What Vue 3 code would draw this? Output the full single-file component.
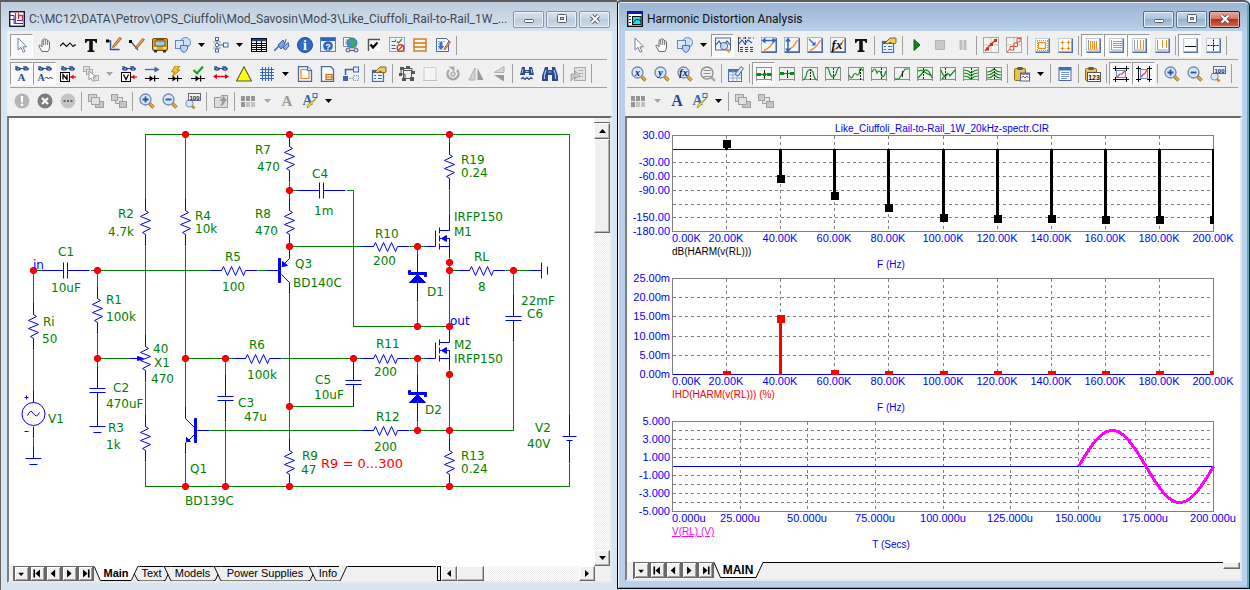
<script setup>
const navy = '#2b4a8b'
const lens = (inner) =>
  `<path d="M10.5 10.5L14.5 14.5" stroke="#a86f1c" stroke-width="3.4"/><path d="M10.5 10.3L14.3 14.1" stroke="#f0b63c" stroke-width="1.6"/><circle cx="6.5" cy="6.5" r="5.500" fill="#d6e8fb" stroke="#6f88b0" stroke-width="1.3"/>${inner}`
const glasses = `<g fill="${navy}"><ellipse cx="4" cy="2.8" rx="2.9" ry="1.9"/><ellipse cx="12" cy="2.8" rx="2.9" ry="1.9"/><path d="M6 2h4v1H6zM1 .2h3v1H1zM9 .2h4v1H9z"/></g><path d="M3 3h2M11 3h2" stroke="#9db6e0"/>`
const diode = `<path d="M1 12.5h14" stroke="#000"/><path d="M5.5 9.5v6l4-3zM10 9.5h1.2v6H10z" fill="#000"/>`
const panel = (inner) =>
  `<rect x="1.5" y="1.5" width="13" height="13" fill="#fff" stroke="#c3cbd8"/><path d="M1.5 15.5h14v-14" stroke="#54719f" stroke-width="1.6" fill="none"/>${inner}`
const wave = (inner) =>
  `<path d="M.5 1v14M15.500 1v14" stroke="#8c8c8c" fill="none"/><path d="M0 1.500h16M0 13.500h16" stroke="#8c8c8c" fill="none"/><g fill="none" stroke="#0b8a17" stroke-width="1.2">${inner}</g>`
const curve = (inner) =>
  `<rect x=".5" y=".5" width="14" height="14" fill="#f4f8fd" stroke="#a3b4cc"/><path d="M.5 15.3h15.1V1" stroke="#4d6792" fill="none" stroke-width="1.4"/><path d="M3 13.5C7 12 11 8 13.5 3" stroke="#ef8a22" stroke-width="1.4" fill="none"/>${inner}`
const ball = (t) => lens(`<text x="6.500" y="9.500" text-anchor="middle" font-family="Liberation Serif" font-size="10" font-style="italic" font-weight="bold" fill="#0b1735">${t}</text>`)
const pencil = `<path d="M15.500 1.500L9 9.500L6.500 10.500L7.500 8L13.500 .5Z" fill="#e6a865" stroke="#8a4b1c" stroke-width=".8"/>`
const serif = (t, c, s = 15, x = 8, y = 13) =>
  `<text x="${x}" y="${y}" text-anchor="middle" font-family="Liberation Serif" font-size="${s}" font-weight="bold" fill="${c}">${t}</text>`
const clip = `<rect x=".5" y="2.500" width="11" height="12" rx="1" fill="#edc04a" stroke="#8c6a1b"/><path d="M3.500 1h5v3h-5z" fill="#5a5a5a"/>`
const bigT = `<path d="M2 2h12v4h-1.200q-.4-2.300-3-2.300v9q0 .9 1.700.9V15h-7v-1.400q1.700 0 1.700-.9v-9q-2.600 0-3 2.300H2z" fill="#111"/>`

const icons = {
  cursor: `<path d="M4 1V13L7 10.4L9.2 15.2L11 14.4L8.9 9.8H12.5Z" fill="#fff" stroke="#6b7fa3"/>`,
  hand: `<path d="M5 14.5L2 9.5Q1.4 7.8 3.2 8.2L5 10V3.5Q5.8 2.2 6.6 3.5V2.3Q7.6 1 8.6 2.3V3Q9.6 1.9 10.5 3.2V4.4Q11.6 3.3 12.5 4.8V10Q12.4 13 11 14.5Z" fill="#f8f8f8" stroke="#6a6a6a"/><path d="M6.7 3.5V8M8.7 3V8M10.6 4.4V8" stroke="#6a6a6a" stroke-width=".9"/>`,
  zigzag: `<path d="M0 9L3 6L6.500 9.500L10 6L13 9.500L14.500 8H16" fill="none" stroke="#000" stroke-width="1.1"/>`,
  text: bigT,
  wire: `<path d="M1 4h3.5v8.5h9" fill="none" stroke="${navy}" stroke-width="1.4"/><rect y="2.5" width="3" height="3" fill="#000"/>${pencil}`,
  diag: `<path d="M1.5 4L9 13" fill="none" stroke="#555" stroke-width="1.2"/><rect y="3" width="3" height="3" fill="#000"/><g transform="translate(0 1)">${pencil}</g>`,
  bus: `<rect x=".5" y="1.5" width="15" height="12" rx="1.5" fill="#e8a80c" stroke="#6e4a08"/><rect x="3" y="4" width="10" height="5" fill="#9ecbe8" stroke="#444" stroke-width=".8"/><path d="M2 11h3M11 11h3" stroke="#fff" stroke-width="1.5"/><path d="M2 13h3v2.5H2zM11 13h3v2.5h-3z" fill="#333"/><path d="M4 2.5h8" stroke="#555"/>`,
  shapes: `<circle cx="10.5" cy="5.5" r="5" fill="#cfe0f6" stroke="#5f86bd"/><rect x=".5" y="3.5" width="8" height="8" fill="#dce9f9" stroke="#5f86bd"/><path d="M5.5 8.5h7v3.5q-1.5 3-3.5 3.5q-2.5-.6-3.5-3.5z" fill="#bcd3f2" stroke="#4672b4"/>`,
  flow: `<g fill="#fff" stroke="#44658f"><rect x="2.5" y=".5" width="3" height="3"/><circle cx="4" cy="8" r="1.8"/><rect x="2.5" y="12" width="3" height="3"/><rect x="10.5" y="6" width="4.5" height="4"/><path d="M4 3.5v2.7M4 10v2M6 8h4.5" fill="none"/></g><path d="M.5 5h2M.5 11h2M6 5h2M6 11h2" stroke="#6f8fb5"/>`,
  table: `<rect x=".5" y="1.5" width="15" height="13" fill="#fff" stroke="#000"/><path d="M1 3h14" stroke="#24418c" stroke-width="2.5"/><path d="M1 6.5h14M1 8.500h14M1 10.500h14M1 12.5h14M5.5 4v11M10.5 4v11" stroke="#000"/>`,
  plug: `<path d="M0 14L6 8" stroke="#4a6fb3" stroke-width="1.6"/><path d="M4 8L9 3L11 7L7 12Z" fill="#7fa3dc" stroke="#385b9f"/><path d="M9 11L14 5.5L15 9L11.5 13Z" fill="#97b6e6" stroke="#385b9f"/><path d="M12 2L11 6" stroke="#385b9f"/>`,
  info: `<circle cx="8" cy="8" r="7.5" fill="#2e6bc9" stroke="#1d4a99"/><text x="8" y="13" text-anchor="middle" font-family="Liberation Serif" font-weight="bold" font-size="14" fill="#fff">i</text>`,
  helpwin: `<rect x=".5" y=".5" width="15" height="14" fill="#e9f1fc" stroke="#5b7fb8"/><path d="M1 2.5h14" stroke="#2f62b5" stroke-width="3"/><circle cx="8" cy="9" r="4.8" fill="#2964c4"/><text x="8" y="12.5" text-anchor="middle" font-family="Liberation Sans" font-weight="bold" font-size="9" fill="#fff">?</text>`,
  net: `<path d="M.5 .5h7v9h-7z" fill="#fff" stroke="#8b8b8b"/><path d="M2 3h3M2 5h3M2 7h3" stroke="#8aa2c4"/><circle cx="9" cy="6" r="5" fill="#3c8fd4" stroke="#2b5f98" stroke-width=".8"/><path d="M6 3q3-2 4 1l3 1q-1 4-4 5l-1-3z" fill="#3fae45"/><path d="M5 13.5h8" stroke="#667" stroke-width="1.2"/><circle cx="5" cy="13" r="2" fill="#dde" stroke="#556"/><circle cx="13" cy="13" r="2" fill="#dde" stroke="#556"/>`,
  check: `<rect x="2" y="2" width="12" height="12" fill="#fff"/><path d="M2.5 14V2.5H14" stroke="#555" stroke-width="1.5" fill="none"/><path d="M4.5 7.5L7 10.5L11.5 5.5" fill="none" stroke="#000" stroke-width="2.2"/>`,
  props: `<rect x=".5" y=".5" width="15" height="14" fill="#eef4fb" stroke="#8ea6c8"/><path d="M2.5 4.5h4v-2M2.5 8.5h4M2.5 11.5h4" stroke="#3f5f94" fill="none"/><path d="M8 4.5l1.5 1.5l3.5-4" stroke="#2f9c38" stroke-width="1.4" fill="none"/><circle cx="11.5" cy="11" r="3.3" fill="#fff" stroke="#e0301e" stroke-width="1.4"/><path d="M9.5 13l4-4" stroke="#e0301e" stroke-width="1.3"/>`,
  ortho: `<rect x="2" y="2" width="12" height="12" fill="#fff8ec" stroke="#c97a1b" stroke-width="1.4"/><path d="M2 6h12M2 10h12" stroke="#c97a1b" stroke-width="1.4"/>`,
  edit: `<path d="M1.5 1.5h10l2 2v11h-12z" fill="#fff" stroke="#4b6897"/><path d="M3 4.5h8M3 7h3M3 12h6" stroke="#7d8fae" stroke-dasharray="1.5 1.2"/><path d="M4.500 5v4H2.500L6 13l3.500-4H7.500V5z" fill="#3b73d1"/><path d="M15.5 5L11 11.5L9.5 13L10 10.5L14 4Z" fill="#e9b27a" stroke="#8a3d1c" stroke-width=".8"/>`,
  glassA: glasses + serif('A', navy, 11, 7.5, 15),
  glassW: glasses + serif('A', navy, 10, 4, 15) + `<path d="M8 12.5l1.5-1.5l2 2l2-2l2 2" stroke="#222" fill="none"/>`,
  glassN: glasses + `<rect x=".5" y="6.500" width="9" height="9" fill="#fff" stroke="#000"/><path d="M3 13.500v-5l4 5v-5" fill="none" stroke="#000" stroke-width="1.3"/><path d="M10 11h6" stroke="#e3001b" stroke-width="1.2"/><path d="M13.500 8.500v5L10.500 11z" fill="#e3001b"/>`,
  glassV: glasses + `<rect x=".5" y="6.500" width="9" height="9" fill="#fff" stroke="#000"/><path d="M2.500 8.500L5 13.500l2.500-5" fill="none" stroke="#000" stroke-width="1.3"/><path d="M10 11h6" stroke="#e3001b" stroke-width="1.2"/><path d="M13.500 8.500v5L10.500 11z" fill="#e3001b"/>`,
  layers: `<g fill="#ddd" stroke="#aaa"><rect x=".5" y=".5" width="6" height="5"/><rect x="3.5" y="3.5" width="6" height="5"/><rect x="9.5" y="9.5" width="6" height="5"/></g><path d="M6 5v9l2-2l2 3.5l1.5-1L10 11h3z" fill="#fff" stroke="#999"/>`,
  curr: `<path d="M1 3.5h12" stroke="#4169a8" stroke-width="1.3"/><path d="M10.5 .5l5 3l-5 3z" fill="#4169a8"/>${diode}`,
  bolt: `${diode}<path d="M8 0h5L10 4h3L5 11L7.5 6H4.5Z" fill="#f8c51c" stroke="#a8690a" stroke-width=".8"/>`,
  tick: `${diode}<path d="M3.5 4L7 7.5L13 .5" fill="none" stroke="#1f9a2d" stroke-width="2.2"/>`,
  redarrow: glasses + `<path d="M2 10.5h12" stroke="#e3001b" stroke-width="1.4"/><path d="M4 8v5l-4-2.5zM12 8v5l4-2.5z" fill="#e3001b"/>`,
  tri: `<path d="M8 .8L15.5 15H.5Z" fill="#ffff00" stroke="#555" stroke-width="1.1"/>`,
  grid: `<path d="M3.5 1v14M6.5 1v14M9.5 1v14M12.5 1v14M1 3.5h14M1 6.5h14M1 9.5h14M1 12.5h14" stroke="#3465b5"/>`,
  page: `<path d="M1.5 .5h9l4 4v11h-13z" fill="#fff" stroke="#4b6897" stroke-width="1.3"/><rect x="4" y="3.5" width="8" height="9" fill="none" stroke="#e2872a" stroke-width="1.2"/><path d="M10.5 .5v4h4" fill="#dce6f5" stroke="#4b6897"/>`,
  pagebox: `<path d="M1.5 .5h9l3 3v12h-12z" fill="#fff" stroke="#4b6897" stroke-width="1.3"/><rect x="6" y="8.5" width="6" height="5" fill="#ffe9cf" stroke="#c96b12" stroke-width="1.2"/><path d="M6 11h6" stroke="#c96b12"/>`,
  flip: `<path d="M2.500 9V3.5h8" stroke="#3d66ab" fill="none" stroke-width="1.5"/><rect x="10.500" y="1" width="5" height="5" fill="#e4ecf8" stroke="#3d66ab"/><rect x="0" y="10" width="5" height="5" fill="#3d66ab"/><path d="M6 12.5h4M10.5 9.5h5v5h-5z" fill="none" stroke="#7d9acb" stroke-dasharray="1.5 1"/>`,
  panel: `<rect x="1.5" y="4.5" width="11" height="11" fill="#eef4fc" stroke="#4b6897" stroke-width="1.2"/><path d="M2 6h10" stroke="#4b6897" stroke-width="2"/><path d="M3 9.5h2M7 9.5h4M3 12.5h2M7 12.5h4" stroke="#4b6897"/><path d="M4 6L9 1h6v5l-3 1l-3-2l-2 2z" fill="#f0cb62" stroke="#7c5b12" stroke-width=".9"/>`,
  selbox: `<g fill="#555"><path d="M1 1h4v3H1zM7 0h4v3H7zM0 7h3v3H0zM3 12h4v3H3zM11 11h4v4h-4zM13 5h3v3h-3z"/></g><rect x="4.5" y="4.5" width="8" height="8" fill="none" stroke="#555"/><path d="M3 2.5h10v4M2 4v4h4v5" fill="none" stroke="#555"/>`,
  blank: `<rect x="2" y="1.5" width="12" height="13" rx="1" fill="#f5f5f5" stroke="#cacaca"/><path d="M1 14.5h14" stroke="#c0c0c0"/>`,
  rotate: `<path d="M4 4A5.5 5.5 0 1 0 12 4" fill="none" stroke="#a9a9a9" stroke-width="2.5"/><circle cx="8" cy="8" r="2.2" fill="#ddd" stroke="#999"/><path d="M3.5 .5h6v5z" fill="#a9a9a9"/>`,
  mirh: `<path d="M7 2v12H1z" fill="#d5d5d5" stroke="#b0b0b0"/><path d="M9.5 2v12h6z" fill="#999"/>`,
  mirv: `<path d="M13 .5v6L3 6.500z" fill="#d5d5d5" stroke="#b0b0b0"/><path d="M13 9v6.500L3 9z" fill="#999"/>`,
  find: `<g fill="${navy}"><path d="M3 1h3v3h4V1h3l2 8h-5V7H6v2H1z"/></g><path d="M4 3l-1 4M6.500 5.500h3M12 3l1 4" stroke="#a9c0e8"/><path d="M2 13l2-1.5l2 2l2-2l2 2l2-2l1.5 1.5" stroke="#1d2fae" fill="none" stroke-width="1.1"/>`,
  binoc: `<path d="M3 1h3v3h4V1h3l3 9v5h-6V9H6v6H0v-5z" fill="${navy}"/><path d="M4 4l-1.5 5v4M12 4l1.500 5v4M6.5 6h3" stroke="#a9c0e8" stroke-width="1.2" fill="none"/>`,
  export: `<rect x="4.5" y="1.5" width="11" height="13" fill="#e2e2e2" stroke="#ababab"/><path d="M9 4.5h4M9 7.5h4M9 10.5h4" stroke="#999" stroke-dasharray="1.5 1"/><path d="M1 15V8h4V5l5 4.5L5 13v-2.5z" fill="#c8c8c8" stroke="#999" stroke-width=".8"/>`,
  excl: `<circle cx="8" cy="8" r="7.5" fill="#b5b5b5"/><path d="M6.700 3h2.600l-.5 6.500H7.200zM6.800 10.800h2.400v2.200H6.800z" fill="#fff"/>`,
  xcirc: `<circle cx="8" cy="8" r="7.5" fill="#7c7c7c"/><path d="M5 5l6 6M11 5l-6 6" stroke="#fff" stroke-width="2.2"/>`,
  dots: `<circle cx="8" cy="8" r="7.5" fill="#c4c4c4"/><path d="M3.5 7h2v2h-2zM7 7h2v2H7zM10.5 7h2v2h-2z" fill="#666"/>`,
  front: `<g stroke="#a0a0a0"><rect x=".5" y="1.5" width="8" height="7" fill="#d4d4d4"/><rect x="7.5" y="8.5" width="8" height="6" fill="#c4c4c4"/><rect x="3.5" y="4.5" width="8" height="7" fill="#e0e0e0"/></g>`,
  back: `<g stroke="#a0a0a0"><rect x="4.5" y="4.5" width="7" height="6" fill="#e4e4e4"/><rect x=".5" y="1.5" width="6" height="6" fill="#cacaca"/><rect x="8.5" y="8.5" width="7" height="6" fill="#c4c4c4"/></g>`,
  zoomin: lens('<path d="M3.5 6.5h6M6.5 3.5v6" stroke="#2c52a0" stroke-width="1.8"/>'),
  zoomout: lens('<path d="M3.5 6.5h6" stroke="#2c52a0" stroke-width="1.8"/>'),
  zoom100: `<path d="M7 13l2.5 2.5" stroke="#c98a25" stroke-width="2.5"/><circle cx="4.5" cy="10.5" r="3.6" fill="#d6e8fb" stroke="#7c8cab"/><rect x="3.500" y=".5" width="12" height="7" fill="#eef3fa" stroke="#55698f"/><text x="9.500" y="6.5" text-anchor="middle" font-family="Liberation Sans" font-weight="bold" font-size="6" fill="#223">100</text>`,
  up: `<path d="M1.5 4.5h6l1-2h6v12h-13z" fill="#dcdcdc" stroke="#999"/><path d="M5 13q4 0 4-5H6.5L10.5 3L14 8h-2q0 5-7 5z" fill="#999"/>`,
  cells: `<path d="M0 3h4v5H0zM5 3h4v5H5zM10 3h4v5h-4zM0 9h4v5H0z" fill="#969696"/><path d="M5 9h4v5H5zM10 9h4v5h-4z" fill="#c2c2c2"/>`,
  agray: serif('A', '#999', 15),
  ablue: serif('A', '#1f4690', 16),
  acolor: serif('A', '#3868b5', 14, 5.5, 12) + `<path d="M14.5 5L8 13l-3 2l1-3.5z" fill="#ffe23c" stroke="#9a7b1d" stroke-width=".7"/><rect x="11" y=".5" width="4" height="4" fill="none" stroke="#3868b5"/>`,
  scope: `<rect x=".5" y="1" width="15" height="12" fill="#f4f8fd" stroke="#4d6792"/><path d="M1 8l3-4l4 6l4-6l3 4" stroke="#2b56b0" fill="none" stroke-width="1.2"/><circle cx="9" cy="9" r="3.6" fill="#cde2f9" fill-opacity=".8" stroke="#4d6792"/><path d="M11.5 12l3 3.5" stroke="#e0a030" stroke-width="2"/>`,
  ctable: `<path d="M0 1h16" stroke="#444" stroke-dasharray="3 2"/><path d="M.5 0v15" stroke="#444"/><path d="M1 7l3-4l3 4l3-4l4 3" stroke="#2b56b0" fill="none" stroke-width="1.2"/><path d="M7.5 0v9" stroke="#333" stroke-dasharray="2 1"/><path d="M2 10.5h3M2 12.5h3M2 14.5h3M7 10.5h3M7 12.5h3M7 14.5h3M12 10.5h3M12 12.5h3M12 14.5h3" stroke="#444"/>`,
  fitx: curve('<path d="M2 3.5h12" stroke="#2765c9" stroke-width="1.5"/><path d="M4.5 .5v6l-4-3zM11.5 .5v6l4-3z" fill="#2765c9"/>'),
  fity: curve('<path d="M4 2v12" stroke="#2765c9" stroke-width="1.5"/><path d="M1 4.5h6l-3-4zM1 11.5h6l-3 4z" fill="#2765c9"/>'),
  fitd: curve('<path d="M2 2l5 5" stroke="#2765c9" stroke-width="1.3"/><path d="M8.5 4.5v4h-4z" fill="#2765c9"/>'),
  fx: curve('<text x="7" y="11.5" text-anchor="middle" font-family="Liberation Serif" font-size="13" font-style="italic" font-weight="bold" fill="#111">fx</text>'),
  play: `<path d="M5 2.5L11 8L5 13.5Z" fill="#12831c" stroke="#0b5e12"/>`,
  stop: `<rect x="3.5" y="3.5" width="9" height="9" fill="#c9c9c9" stroke="#b5b5b5"/>`,
  pause: `<path d="M5 3.5h2v9H5zM9 3.5h2v9H9z" fill="#ccc" stroke="#aaa" stroke-width=".7"/>`,
  tok1: `<rect x=".5" y=".5" width="15" height="15" fill="#f6f3ea" stroke="#aaa"/><path d="M8 1v14M1 8h14" stroke="#cfc9b8"/><path d="M2 14L8 7L14 2" stroke="#c9302a" fill="none" stroke-width="1.2"/><path d="M3 10.500h3v3H3zM7 6h3v3H7zM11 2h3v3h-3z" fill="#c9302a"/>`,
  tok2: `<rect x=".5" y=".5" width="15" height="15" fill="#f6f3ea" stroke="#aaa"/><path d="M8 1v14M1 8h14" stroke="#cfc9b8"/><path d="M1 15L15 1" stroke="#d2524c"/><path d="M4 9.5h3.5V13H4zM8 6h3.5v3.5H8zM11 1.5h3V5h-3z" fill="#fff" stroke="#d2524c"/>`,
  rul: panel('<rect x="4.500" y="5.500" width="7" height="6" fill="none" stroke="#f08c1a" stroke-width="1.300"/><path d="M3 3.500h11M3 13.500h11" stroke="#f08c1a" stroke-dasharray="1 1"/><path d="M3.500 4v9M13.500 4v9" stroke="#f08c1a" stroke-dasharray="1 1"/>'),
  plus: panel('<path d="M3.500 5.500h4M5.500 3.500v4M9.500 5.500h4M11.500 3.500v4M3.500 11.500h4M5.500 9.500v4M9.500 11.500h4M11.500 9.500v4" stroke="#f08c1a"/>'),
  vg1: panel('<path d="M3.5 3v10h10" stroke="#99a" fill="none"/><path d="M5.5 4v8M7.5 4v8M9.5 4v8M11.5 4v8" stroke="#f08c1a"/>'),
  hg1: panel('<path d="M3.5 3v10h10" stroke="#99a" fill="none"/><path d="M5 4.5h9M5 6.5h9M5 8.5h9M5 10.5h9" stroke="#f08c1a"/>'),
  vg2: panel('<path d="M3.5 3v10h10" stroke="#99a" fill="none"/><path d="M6.5 3v9M9.5 3v9M12.5 3v9" stroke="#f08c1a"/>'),
  vg3: panel('<path d="M3.5 3v10h10" stroke="#99a" fill="none"/><path d="M8.500 3v8M12.500 3v8" stroke="#f08c1a"/>'),
  hl: panel('<path d="M3 9.500h11" stroke="#000"/>'),
  cross: panel('<path d="M8.500 2.500v12M2.500 8.500h12" stroke="#000" stroke-dasharray="2 1"/>'),
  bx: ball('x'), by: ball('y'), bf: ball('fx'),
  beq: `<path d="M11 11l4 4" stroke="#aaa" stroke-width="2.5"/><circle cx="7" cy="7" r="6" fill="#eee" stroke="#8d8d8d" stroke-width="1.3"/><path d="M3.5 4.500h7M3.5 7.5h7M3.5 10.500h7" stroke="#8d8d8d"/>`,
  eraser: `<rect x=".5" y="3.5" width="13" height="12" fill="#f4f8fd" stroke="#4b74b3"/><path d="M.5 5h13" stroke="#4b74b3" stroke-width="2.5"/><path d="M5 5v10M9 5v10M1 9h12M1 12h12" stroke="#8fabd3"/><path d="M7 8l6-7.5l2.5 2L10 10z" fill="#dde3ec" stroke="#4b6897"/>`,
  w1: wave('<path d="M8.500 4v9" stroke="#222" stroke-width="1"/><path d="M0 8.500h16"/><path d="M1 7h4v3H1zM11 7h4v3h-4zM7 7h3v3H7z" fill="#0b8a17" stroke="none"/>'),
  w2: wave('<path d="M8.500 4v8" stroke="#222" stroke-width="1"/><path d="M2 7.500h12"/><path d="M1 6h4v3H1zM11 6h4v3h-4z" fill="#0b8a17" stroke="none"/>'),
  w3: wave('<path d="M1 14Q4 13 5 6Q8 1 11 6Q12 13 15 14"/><path d="M8.500 3v11" stroke="#222" stroke-width="1" stroke-dasharray="2 1"/>'),
  w4: wave('<path d="M1 1Q4 2 5 8Q8 14 11 8Q12 2 15 1"/><path d="M8.500 2v11" stroke="#222" stroke-width="1" stroke-dasharray="2 1"/>'),
  w5: wave('<path d="M1 9Q3 15 5.5 9Q7 6 9 9Q12 9 11.5 4Q13 1 15 5"/><path d="M12.500 3v11" stroke="#222" stroke-width="1" stroke-dasharray="2 1"/>'),
  w6: wave('<path d="M1 6Q4 0 6 7Q8 3 10 7Q12 15 15 5"/><path d="M10.5 2v11" stroke="#222" stroke-width="1" stroke-dasharray="2 1"/>'),
  w7: wave('<path d="M1 13H5L11 3H15"/><path d="M8.500 5v6" stroke="#222" stroke-width="1"/>'),
  w8: wave('<path d="M1 12L8 4Q12 3 15 12M1 5Q6 3 9 7L15 10"/><path d="M6.500 2v11" stroke="#222" stroke-width="1" stroke-dasharray="2 1"/>'),
  w9: wave('<path d="M1 4Q3 11 6 10Q9 6 10 10L15 4M2 13L8 7"/><path d="M5.500 2v11" stroke="#222" stroke-width="1" stroke-dasharray="2 1"/>'),
  w10: wave('<path d="M1 4Q5 4 8 7Q11 4 15 4M1 7Q5 7 8 10Q11 7 15 7M1 10Q5 10 8 13Q11 10 15 10"/><path d="M8.500 2v12" stroke="#222" stroke-width="1" stroke-dasharray="2 1"/>'),
  w11: wave('<path d="M1 6Q5 6 8 3Q11 6 15 6M1 9Q5 9 8 6Q11 9 15 9M1 12Q5 12 8 9Q11 12 15 12"/><path d="M8.500 2v12" stroke="#222" stroke-width="1" stroke-dasharray="2 1"/>'),
  paste: `${clip}<rect x="6.5" y="7" width="9" height="8" fill="#fff" stroke="#4b6897"/><path d="M7.5 12l1.5-2l2 2l2-2l1.5 2" stroke="#d23a2e" fill="none"/><path d="M7 8h8" stroke="#4b6897" stroke-width="1.5"/>`,
  list: `<rect x="2" y="1.5" width="12" height="13" fill="#fff" stroke="#4b6897"/><path d="M2 3h12" stroke="#3d6fc4" stroke-width="3"/><path d="M4 6.5h8M4 8.5h8M4 10.5h8M4 12.5h6" stroke="#6f92c8"/>`,
  clip123: `${clip}<rect x="2.500" y="6.500" width="13" height="9" fill="#fff" stroke="#555"/><text x="9" y="13.500" text-anchor="middle" font-family="Liberation Sans" font-size="7" font-weight="bold" fill="#111">123</text>`,
  ext1: `<path d="M0 2.5h16M0 13.500h16" stroke="#000"/><path d="M2.500 0v5M13.500 0v5M2.500 11v5M13.500 11v5" stroke="#000"/><rect x="3.5" y="4.5" width="9" height="7" fill="#eef3fb" stroke="#6f8fc0"/><path d="M4 11l3-3h2l3-3" stroke="#e23b33" stroke-width="1.2" fill="none"/>`,
  ext2: `<path d="M2.500 0v16M13.500 0v16" stroke="#000"/><path d="M0 2.500h5M0 13.500h5M11 2.500h5M11 13.500h5" stroke="#000"/><rect x="4.500" y="3.500" width="7" height="9" fill="#eef3fb" stroke="#6f8fc0"/><path d="M5 11l2.500-3h1l2.500-4" stroke="#e23b33" stroke-width="1.2" fill="none"/>`,
  app1: `<rect x=".7" y=".7" width="14.6" height="14.6" fill="#fff" stroke="#16163c" stroke-width="1.4"/><path d="M1 4.500h4v8M1 8.500h5M5 12.500h9M8 9.500h6" stroke="#1b36d8" fill="none"/><path d="M6.500 2v11M9.500 2v6M9.500 4.500h4v6" stroke="#e0242a" stroke-width="1.3" fill="none"/>`,
  app2: `<rect x=".7" y=".7" width="14.6" height="14.6" fill="#fff" stroke="#111" stroke-width="1.4"/><path d="M0 1.5h16" stroke="#0a14c8" stroke-width="3"/><path d="M2 5.5h2M2 8.5h2M2 11.5h2" stroke="#333"/><rect x="5.5" y="5.5" width="8.500" height="8" fill="#27e0e6" stroke="#111"/><path d="M6 12q3-6 8-2" stroke="#111" fill="none"/>`
}

const parse = (s) => s.split(' ').map((t) => {
  if (t === '|') return { kind: 'sep' }
  if (t === 'v' || t === 'v-') return { kind: 'caret', off: t === 'v-' }
  return { kind: 'btn', on: t[0] === '*', name: t.replace('*', '') }
})

const nodes = (list) => list.split(' ').map((p) => p.split(',').map(Number))
const dots = nodes('185,134 289,134 449,134 289,190 289,246 417,246 449,262 449,270 513,270 33,270 97,270 417,326 449,326 97,358 185,358 225,358 353,358 417,358 449,374 289,406 417,430 449,430 185,486 225,486 289,486 449,486')

const resV = nodes('145,222 145,358 145,438 185,222 289,158 289,222 289,462 33,326 97,310 449,166 449,462')
const resH = nodes('233,270 257,358 385,246 385,358 385,430 481,270')
const capH = nodes('65,270 321,190')
const capV = nodes('97,390 225,398 353,382 513,318')
const fets = nodes('449,246 449,358')
const diodes = nodes('417,278 417,398')

const labels = [
  ['R7', 255, 154], ['470', 257, 171], ['R8', 255, 218], ['470', 255, 235], ['R2', 118, 218], ['4.7k', 108, 236],
  ['R4', 195, 220], ['10k', 195, 233], ['C1', 58, 256], ['10uF', 51, 292], ['R5', 225, 261], ['100', 222, 291],
  ['R1', 106, 304], ['100k', 106, 321], ['Ri', 43, 326], ['50', 42, 343], ['40', 153, 353], ['X1', 154, 367],
  ['470', 151, 383], ['C2', 113, 392], ['470uF', 106, 408], ['V1', 48, 423], ['R3', 108, 432], ['1k', 106, 449],
  ['R6', 249, 349], ['100k', 247, 379], ['C3', 238, 407], ['47u', 244, 421], ['Q1', 190, 473], ['BD139C', 185, 505],
  ['R19', 461, 164], ['0.24', 461, 177], ['C4', 312, 178], ['1m', 314, 215], ['IRFP150', 454, 221], ['M1', 454, 236],
  ['R10', 375, 238], ['200', 373, 265], ['Q3', 295, 268], ['BD140C', 293, 287], ['D1', 427, 296], ['RL', 474, 261],
  ['8', 478, 291], ['22mF', 521, 305], ['C6', 527, 318], ['R11', 376, 348], ['200', 374, 376], ['M2', 454, 349],
  ['IRFP150', 454, 363], ['C5', 315, 384], ['10uF', 314, 399], ['D2', 425, 414], ['R12', 376, 421], ['200', 374, 451],
  ['V2', 535, 432], ['40V', 527, 448], ['R9', 302, 460], ['47', 301, 474], ['R13', 461, 460], ['0.24', 461, 473]
]

const zig = 'l3 2 l-8 4 l10 4 l-10 4 l10 4 l-8 4 l3 2'
const zigH = 'l2 -4 l4 9 l4 -9 l4 9 l4 -9 l4 9 l2 -5'

const freq = [726, 780, 834, 888, 943, 997, 1051, 1105, 1159]
const hz = ['20.00K', '40.00K', '60.00K', '80.00K', '100.00K', '120.00K', '140.00K', '160.00K', '180.00K', '200.00K']
const harm = [...freq, 1213]
const plots = [
  { top: 135, h: 96, zero: 149, xs: freq, ys: [162, 176, 190, 204, 217], xl: hz, xt: harm, first: '0.00K', unit: 'F (Hz)', expr: 'dB(HARM(v(RL)))', cls: 'blk',
    yl: [['30.00', 135], ['-30.00', 162], ['-60.00', 176], ['-90.00', 190], ['-150.00', 217], ['-180.00', 231]] },
  { top: 278, h: 96, zero: 374, xs: freq, ys: [297, 316, 336, 355], xl: hz, xt: harm, first: '0.00K', unit: 'F (Hz)', expr: 'IHD(HARM(v(RL))) (%)', cls: 'red',
    yl: [['25.00m', 278], ['20.00m', 297], ['15.00m', 316], ['10.00m', 336], ['5.00m', 355], ['0.00m', 374]] },
  { top: 421, h: 90, zero: 466, xs: [740, 807, 875, 943, 1010, 1078, 1145], ys: [430, 439, 448, 457, 475, 484, 493, 502], first: '0.000u', unit: 'T (Secs)', expr: 'V(RL) (V)', cls: 'mag',
    xl: ['25.000u', '50.000u', '75.000u', '100.000u', '125.000u', '150.000u', '175.000u', '200.000u'], xt: [740, 807, 875, 943, 1010, 1078, 1145, 1213],
    yl: [['5.000', 421], ['3.000', 439], ['1.000', 457], ['-1.000', 475], ['-3.000', 493], ['-5.000', 511]] }
]
const db = [144, 179, 196, 208, 218, 219, 219, 220, 220, 220]
const ihd = [375, 319, 374, 375, 375, 375, 375, 375, 375, 375]
const sine = Array.from({ length: 69 }, (_, i) => `${1078.5 + i * 135 / 68},${(466.5 - 36 * Math.sin(i / 68 * 2 * Math.PI)).toFixed(1)}`).join(' ')

const navs = [
  ['Sheet list', 'M4 7h7l-3.5 4z'],
  ['First sheet', 'M3 3h2v10H3zM11 3v10L5.5 8z'],
  ['Previous sheet', 'M10 3v10L4.5 8z'],
  ['Next sheet', 'M5 3v10L10.5 8z'],
  ['Last sheet', 'M11 3h2v10h-2zM5 3v10L10.5 8z']
]

const windows = [
  {
    key: 'left', title: 'C:\\MC12\\DATA\\Petrov\\OPS_Ciuffoli\\Mod_Savosin\\Mod-3\\Like_Ciuffoli_Rail-to-Rail_1W_...', icon: 'app1',
    rows: [
      '*cursor hand zigzag text wire diag bus shapes v flow v table plug info helpwin net check props ortho edit |',
      '*glassA *glassW glassN layers v- glassV curr bolt tick redarrow tri grid v page pagebox flip | panel | selbox blank rotate mirh mirv | find binoc | export |',
      'excl xcirc dots | front back | zoomin zoomout zoom100 | up | cells v- agray acolor v'
    ].map(parse),
    tabs: [['Main', 30], ['Text', 23], ['Models', 41], ['Power Supplies', 86], ['Info', 22]]
  },
  {
    key: 'right', title: 'Harmonic Distortion Analysis', icon: 'app2',
    rows: [
      'cursor hand shapes v *scope ctable fitx fity fitd fx text | panel | play stop pause | tok1 tok2 | rul plus | *vg1 *hg1 *vg2 vg3 | *hl cross |',
      'bx by bf beq | eraser | *w1 w2 w3 w4 w5 w6 w7 w8 w9 w10 w11 | paste v | list | clip123 | *ext1 *ext2 | zoomin zoomout zoom100 |',
      'cells v- ablue acolor v | front back'
    ].map(parse),
    tabs: [['MAIN', 34]]
  }
]
</script>

<template>
  <main class="desk">
    <section v-for="w in windows" :key="w.key" :class="['win', w.key]">
      <header class="title">
        <svg class="ico" viewBox="0 0 16 16" v-html="icons[w.icon]" />
        <h1>{{ w.title }}</h1>
        <div class="ctl">
          <button aria-label="Minimize"><svg viewBox="0 0 16 12"><rect x="3.5" y="6.5" width="9" height="3" rx="1" fill="#fff" stroke="#55606e" /></svg></button>
          <button aria-label="Maximize"><svg viewBox="0 0 16 12"><rect x="3.5" y="1.5" width="9" height="8" rx="1" fill="#fff" stroke="#55606e" /><rect x="6.5" y="4.5" width="3" height="2" fill="#cdd9e6" stroke="#55606e" /></svg></button>
          <button class="close" aria-label="Close"><svg viewBox="0 0 16 12"><path d="M4.5 2.5l7 7M11.5 2.5l-7 7" stroke="#55606e" stroke-width="4" /><path d="M4.5 2.5l7 7M11.5 2.5l-7 7" stroke="#fff" stroke-width="2" /></svg></button>
        </div>
      </header>
      <div class="client">
        <div class="bars">
          <div v-for="(row, r) in w.rows" :key="r" class="bar" role="toolbar">
            <template v-for="(it, i) in row" :key="i">
              <span v-if="it.kind === 'sep'" class="sep" />
              <button v-else-if="it.kind === 'caret'" class="caret" :class="{ off: it.off }" aria-label="More"><svg viewBox="0 0 7 4"><path d="M0 0h7L3.5 4z" fill="currentColor" /></svg></button>
              <button v-else class="tool" :class="{ on: it.on }" :aria-label="it.name"><svg class="ico" viewBox="0 0 16 16" v-html="icons[it.name]" /></button>
            </template>
          </div>
        </div>

        <div class="inset">
          <div class="view">
            <svg v-if="w.key === 'left'" class="draw schem">
              <g transform="translate(-9 -118)">
                <g transform="translate(.5 .5)" class="wire">
                  <path d="M145 198V134H569V414M569 463V486H145V462M145 414V382M145 334V246M185 134V198M185 246V406M185 454V486M289 182V198M289 294V438M449 134V142M449 190V214M449 258V326M449 374V438M33 270H41M90 270H209M33 270V302M33 350V390M33 438V446M97 270V286M97 334V366M97 358H129M257 270H266M289 190H297M346 190H353V326H449M289 246H361M409 246H425M417 246V254M417 302V326M449 270H457M505 270H529M513 270V294M513 342V430H409M361 430H209M185 358H233M281 358H361M409 358H425M417 358V374M417 422V430M225 358V374M225 422V486M353 358V366M353 406H289" />
                </g>
                <g transform="translate(.5 .5)" class="part">
                  <path v-for="([x, y], i) in resV" :key="'a' + i" :d="`M${x} ${y - 24}v12 ${zig} v12`" />
                  <path v-for="([x, y], i) in resH" :key="'b' + i" :d="`M${x - 24} ${y}h12 ${zigH} h12`" />
                  <path v-for="([x, y], i) in capH" :key="'c' + i" :d="`M${x - 24} ${y}h22m0 -8v16m4 0v-16m0 8h22`" />
                  <path v-for="([x, y], i) in capV" :key="'d' + i" :d="`M${x} ${y - 24}v22m-8 0h16m0 4h-16m8 0v22`" />
                  <g v-for="([x, y], i) in fets" :key="'e' + i">
                    <path :d="`M${x - 24} ${y}h10v-16M${x - 10} ${y - 19}v6m0 2v6m0 2v6M${x} ${y - 32}v16h-10M${x - 10} ${y}h10M${x - 10} ${y - 8}h10v20`" />
                    <path class="solid" :d="`M${x - 8} ${y - 8}l5 -3v6z`" />
                  </g>
                  <g v-for="([x, y], i) in diodes" :key="'f' + i">
                    <path :d="`M${x} ${y - 24}v48`" />
                    <path class="solid" :d="`M${x - 9} ${y - 8}h2v2h16v4h-2v-2h-16z M${x} ${y - 4}l8 8h-16z`" />
                  </g>
                  <path d="M129 358H142M185 406V418L194 427M197 430H209M194 434L186 442M185 442V454M266 270H278M289 246V258L281 266M281 274L289 282V294" />
                  <path class="solid" d="M194 418h2v24h-2zM278 258h2v24h-2zM143 358l-6 -2v4zM186 441v-4l4 4zM282 266v-5l5 4z" />
                  <path d="M33 390V402M33 426V438M33 446V458M25 458H41M29 464H37M24 397H28M26 395V399M24 431H28M27 415Q30 408 33 413T39 412M97 414V426M89 426H105M93 432H101" />
                  <circle cx="33" cy="413.5" r="11.5" />
                  <path d="M529 270H541M541 262V278M547 266V274M569 414V436M562 436H576M566 440H572M569 440V463" />
                </g>
                <path v-for="([x, y], i) in dots" :key="'n' + i" class="dot" :d="`M${x - 1} ${y - 3}h3l2 2v3l-2 2h-3l-2 -2v-3z`" />
                <text v-for="([t, x, y], i) in labels" :key="'t' + i" :x="x" :y="y">{{ t }}</text>
                <text class="net" x="33" y="269">in</text>
                <text class="net" x="450" y="325">out</text>
                <text class="note" x="321" y="468">R9 = 0...300</text>
              </g>
            </svg>
            <svg v-else class="draw chart" viewBox="627 118 613 444" preserveAspectRatio="xMidYMin meet">
              <clipPath id="plotClip"><rect x="672" y="130" width="542" height="245" /></clipPath>
              <text class="mid cap" x="942" y="132">Like_Ciuffoli_Rail-to-Rail_1W_20kHz-spectr.CIR</text>
              <g v-for="(p, k) in plots" :key="k">
                <g transform="translate(.5 .5)">
                  <path v-for="x in p.xs" :key="'x' + x" class="grid" :d="`M${x} ${p.top}v${p.h}`" />
                  <path v-for="y in p.ys" :key="'y' + y" class="grid" :d="`M672 ${y}h541`" />
                  <rect class="frame" x="672" :y="p.top" width="541" :height="p.h" />
                  <path class="zero" :d="`M672 ${p.zero}h541`" />
                </g>
                <text v-for="([t, y]) in p.yl" :key="t" class="end" x="670" :y="y + 4">{{ t }}</text>
                <text x="672" :y="p.top + p.h + 11">{{ p.first }}</text>
                <text v-for="(t, i) in p.xl" :key="t" class="mid" :x="p.xt[i]" :y="p.top + p.h + 11">{{ t }}</text>
                <text class="cap" :class="p.cls" x="672" :y="p.top + p.h + 24">{{ p.expr }}</text>
                <text class="mid cap" x="891" :y="p.top + p.h + 37">{{ p.unit }}</text>
              </g>
              <g clip-path="url(#plotClip)" shape-rendering="crispEdges">
                <g v-for="(x, i) in harm" :key="x">
                  <rect :x="x - 1" :y="Math.min(149, db[i])" width="3" :height="Math.abs(db[i] - 149) + 1" />
                  <rect :x="x - 3" :y="db[i] - 4" width="8" height="8" />
                  <rect :x="x - 1" :y="ihd[i]" width="3" :height="375 - ihd[i]" fill="#ff0000" />
                  <rect :x="x - 3" :y="ihd[i] - 4" width="8" height="8" fill="#ff0000" />
                </g>
              </g>
              <polyline class="sine" :points="sine" />
            </svg>
            <div v-if="w.key === 'left'" class="vscroll">
              <span class="split" />
              <button class="sb" aria-label="Scroll up"><svg viewBox="0 0 7 4"><path d="M0 4h7L3.5 0z" /></svg></button>
              <span class="thumb" />
              <span class="track" />
              <button class="sb" aria-label="Scroll down"><svg viewBox="0 0 7 4"><path d="M0 0h7L3.5 4z" /></svg></button>
            </div>
          </div>

          <nav class="tabs">
            <span class="grip" />
            <button v-for="([n, d]) in navs" :key="n" class="nav" :aria-label="n"><svg viewBox="0 0 16 16"><path :d="d" /></svg></button>
            <svg class="slant lead" viewBox="0 0 7 16"><path d="M0 0h7v16z" fill="#fff" /><path d="M0 .5L6.5 15.5H7" /></svg>
            <template v-for="([t, wd], i) in w.tabs" :key="t">
              <button class="tab" :class="{ act: i === 0 }" :style="{ width: wd + 'px' }">{{ t }}</button>
              <svg v-if="i === w.tabs.length - 1" class="slant" viewBox="0 0 9 16"><path v-if="i === 0" d="M0 0h8L1 16H0z" fill="#fff" /><path d="M0 15.5h1L8 .5h1" /></svg>
              <svg v-else-if="i === 0" class="slant" viewBox="0 0 9 16"><path d="M0 0h8L1 16H0z" fill="#fff" /><path d="M0 15.5L7 .5H9M3 8L7 15.5H9" /></svg>
              <svg v-else class="slant" viewBox="0 0 9 16"><path d="M0 .5H9M1 .5L8 15.5H9M0 15.5h2L5 9" /></svg>
            </template>
            <span class="fill" />
            <template v-if="w.key === 'left'">
              <span class="grip edge" />
              <button class="sb" aria-label="Scroll left"><svg viewBox="0 0 4 7"><path d="M4 0v7L0 3.5z" /></svg></button>
              <span class="hthumb" />
              <span class="track" />
              <button class="sb" aria-label="Scroll right"><svg viewBox="0 0 4 7"><path d="M0 0v7l4-3.5z" /></svg></button>
              <span class="corner" />
            </template>
            <span v-else class="stub" />
          </nav>
        </div>
      </div>
    </section>
  </main>
</template>

<style>
body { background: #d9e2ec; }
</style>

<style scoped>
.desk { display: grid; grid-template-columns: minmax(0, 617fr) minmax(0, 633fr); min-height: 100vh; font-family: "Liberation Sans", Arial, sans-serif; font-size: 11px; background: #d9e2ec; }
.desk * { box-sizing: border-box; }
button { margin: 0; padding: 0; border: 0; background: none; font: inherit; color: inherit; }
.win { display: flex; flex-direction: column; min-width: 0; border-top: 2px solid #5c5c5c; }
.left { padding: 0 5px 7px 6px; border-left: 1px solid #666; background: linear-gradient(#bccbdb, #d7e4f2 30px); }
.right { margin-bottom: 1px; padding: 0 7px 7px; border: 1px solid #000; border-top: 2px solid #5c5c5c; border-radius: 4px 6px 0 0; background: linear-gradient(#99b4d1, #b9d1ea 30px); box-shadow: inset 1px 0 #f3f8fd, inset 0 1px #e4edf6, inset -2px -1px #32bcd6; }
.title { display: flex; align-items: center; height: 29px; padding: 5px 2px 0; }
.title h1 { flex: 1; min-width: 0; margin: 0 4px; overflow: hidden; white-space: nowrap; font: 400 12px/18px Roboto, "Liberation Sans", sans-serif; color: #0c1016; }
.left h1 { color: #3e4853; }
.ico { display: block; flex: none; width: 16px; height: 16px; }
.ctl { display: flex; gap: 2px; }
.ctl button { display: flex; align-items: center; justify-content: center; width: 31px; height: 17px; border: 1px solid #8594a9; border-radius: 2px; background: linear-gradient(#dbe5f0, #c3d2e3 50%, #b9cbdf 50%, #cfdceb); box-shadow: inset 0 0 0 1px #e9f1f8; }
.ctl svg { width: 16px; height: 12px; }
.right .ctl button { border-color: #55708f; background: linear-gradient(#c4d8ed, #a9c2dd 50%, #93b0d0 50%, #b6cee6); }
.right .ctl .close { border-color: #44151a; background: linear-gradient(#e8a99c, #d37463 48%, #b4301f 50%, #cf6a4b); box-shadow: inset 0 0 0 1px #eab0a3; }
.client { display: flex; flex: 1; flex-direction: column; background: #f0f0f0; }
.bar { display: flex; align-items: center; height: 28px; border-bottom: 1px solid #a0a0a0; }
.bar:first-child { height: 29px; }
.bar:last-child { border: 0; padding-bottom: 2px; }
.left .bar { margin: 0 5px 0 3px; }
.right .bar { margin: 0 4px 0 2px; }
.tool { display: flex; flex: none; align-items: center; justify-content: center; width: 23px; height: 23px; }
.tool.on { border: 1px solid; border-color: #9a9a9a #fff #fff #9a9a9a; background: #f9f9f9; }
.caret { flex: none; display: flex; justify-content: center; align-items: center; width: 15px; height: 22px; color: #000; }
.caret svg { width: 7px; height: 4px; }
.caret.off { color: #a5a5a5; }
.sep { flex: none; width: 5px; height: 19px; background: linear-gradient(90deg, transparent 2px, #a0a0a0 2px, #a0a0a0 3px, transparent 3px); }
.inset { display: flex; flex: 1; flex-direction: column; border: 2px solid; border-color: #696969 #e9e9e9 #e9e9e9 #7d7d7d; background: #fff; }
.view { display: flex; flex: 1; min-height: 0; }
.draw { display: block; flex: 1; width: 0; min-width: 0; height: auto; }
.schem { overflow: hidden; }
.wire path { fill: none; stroke: #008000; shape-rendering: crispEdges; }
.part { fill: none; stroke: #0000ff; stroke-width: 1; }
.part .solid { fill: #0000ff; }
.dot { fill: #ff0000; }
.schem text { font: 12px "DejaVu Sans", Verdana, sans-serif; fill: #008000; }
.schem .net { fill: #0000ff; }
.schem .note { font-size: 13px; fill: #ff0000; }
.chart text { font: 11px "Liberation Sans", Arial, sans-serif; fill: #0000ff; }
.chart .cap { font-size: 10px; }
.chart .mid { text-anchor: middle; }
.chart .end { text-anchor: end; }
.chart .blk { fill: #000; }
.chart .red { fill: #ff0000; }
.chart .mag { fill: #ff00ff; text-decoration: underline; }
.grid { fill: none; stroke: #808080; stroke-dasharray: 3 3; shape-rendering: crispEdges; }
.frame { fill: none; stroke: #808080; shape-rendering: crispEdges; }
.zero { stroke: #0000ff; shape-rendering: crispEdges; }
.sine { fill: none; stroke: #ff00ff; stroke-width: 3; shape-rendering: crispEdges; }
.vscroll { display: flex; flex-direction: column; width: 16px; background: #f0f0f0; }
.split { height: 5px; border-bottom: 1px solid #696969; background: #f0f0f0; }
.sb { display: flex; flex: none; align-items: center; justify-content: center; width: 16px; height: 16px; }
.sb, .thumb, .hthumb { border: 1px solid; border-color: #fff #696969 #696969 #fff; background: #f0f0f0; box-shadow: inset -1px -1px #b5b5b5; }
.vscroll .sb svg { width: 7px; height: 4px; }
.tabs .sb svg { width: 4px; height: 7px; }
.thumb { height: 94px; }
.track { flex: 1; background: repeating-conic-gradient(#fff 0 25%, #ececec 0 50%) 0 0 / 2px 2px; }
.tabs { display: flex; height: 15px; background: #f0f0f0; }
.right .tabs { height: 17px; }
.tabs .sb { height: 15px; }
.grip { flex: none; width: 4px; margin-left: 1px; border-right: 1px solid #696969; background: #f0f0f0; }
.right .grip { width: 6px; }
.nav { flex: none; width: 16px; height: 16px; border: 1px solid #696969; border-right-width: 2px; box-shadow: inset 1px 1px #fff, inset -1px -1px #a0a0a0; background: #f0f0f0; }
.left .nav { height: 15px; }
.nav svg { display: block; width: 13px; height: 13px; }
.slant { flex: none; width: 9px; height: 15px; fill: none; stroke: none; }
.slant path:not([fill]) { stroke: #000; stroke-width: 1; }
.lead { width: 7px; }
.tab { flex: none; height: 15px; white-space: nowrap; text-align: center; border-top: 1px solid #000; border-bottom: 1px solid #808080; line-height: 13px; }
.tab.act { border-top-color: #fff; border-bottom-color: #000; background: #fff; font-weight: 700; }
.right .tab { font-size: 12px; }
.right .slant, .right .tab { height: 16px; }
.fill { flex: 1; border-top: 1px solid #000; }
.left .fill { flex: 0 1 88px; }
.edge { border: 1px solid #000; }
.hthumb { flex: none; width: 27px; }
.corner { width: 15px; background: #f0f0f0; }
.stub { width: 17px; height: 7px; border: 1px solid; border-color: #fff #696969 #696969 #fff; box-shadow: inset -1px -1px #a0a0a0; }
</style>
